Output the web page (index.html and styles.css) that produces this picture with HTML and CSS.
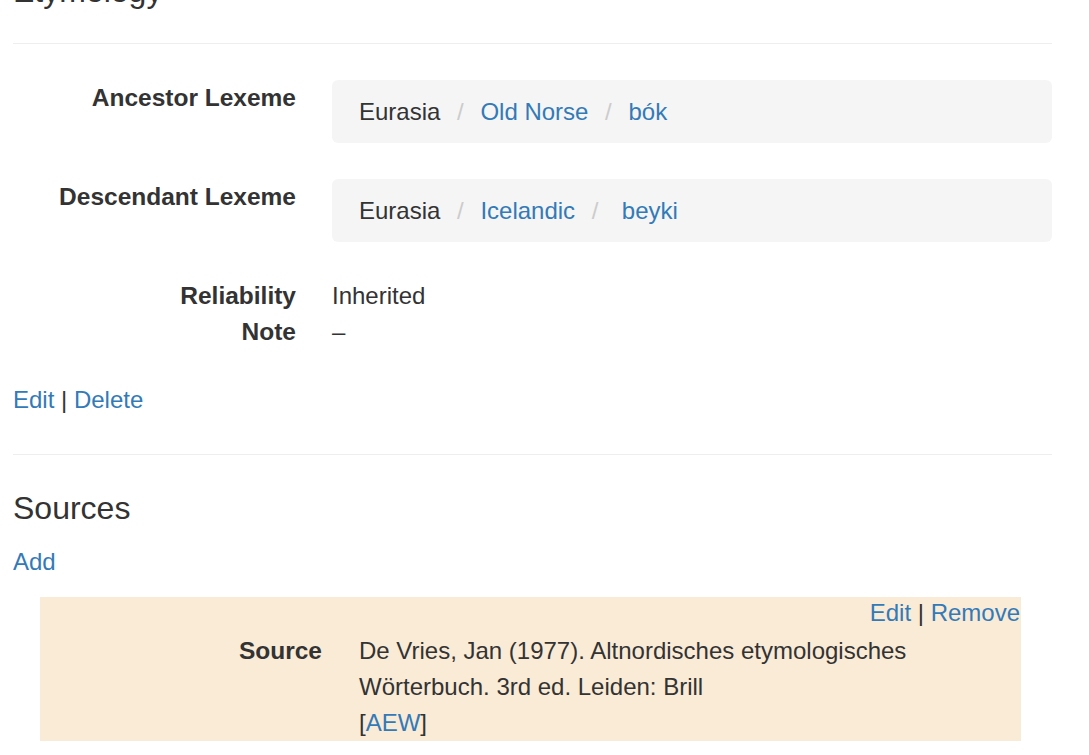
FILE: index.html
```html
<!DOCTYPE html>
<html lang="en">
<head>
<meta charset="utf-8">
<title>Etymology</title>
<link rel="stylesheet" href="styles.css">
</head>
<body>
<div class="page">
  <h2 class="title">Etymology</h2>
  <hr class="rule rule-top">
  <dl class="facts">
    <dt>Ancestor Lexeme</dt>
    <dd>
      <ol class="crumbs">
        <li>Eurasia</li>
        <li><a href="#">Old Norse</a></li>
        <li><a href="#">bók</a></li>
      </ol>
    </dd>
    <dt>Descendant Lexeme</dt>
    <dd>
      <ol class="crumbs">
        <li>Eurasia</li>
        <li><a href="#">Icelandic</a></li>
        <li><a href="#"> beyki</a></li>
      </ol>
    </dd>
    <dt>Reliability</dt>
    <dd>Inherited</dd>
    <dt>Note</dt>
    <dd>–</dd>
  </dl>
  <div class="actions"><a href="#">Edit</a> | <a href="#">Delete</a></div>
  <hr class="rule rule-mid">
  <h3 class="section-title">Sources</h3>
  <div class="add"><a href="#">Add</a></div>
  <div class="source-box">
    <div class="source-actions"><a href="#">Edit</a> | <a href="#">Remove</a></div>
    <dl class="source-facts">
      <dt>Source</dt>
      <dd>De Vries, Jan (1977). Altnordisches etymologisches Wörterbuch. 3rd ed. Leiden: Brill<br>[<a href="#">AEW</a>]</dd>
    </dl>
  </div>
</div>
</body>
</html>
```

FILE: styles.css
```css
html, body {
  margin: 0;
  padding: 0;
  background: #fff;
}

body {
  font-family: "Liberation Sans", Arial, Helvetica, sans-serif;
  font-size: 24px;
  line-height: 36px;
  color: #333;
  overflow: hidden;
}

a {
  color: #337ab7;
  text-decoration: none;
}

.page {
  padding: 0 37px 0 13px;
}

.title {
  font-size: 32px;
  font-weight: normal;
  line-height: 35px;
  margin: -26px 0 0;
}

.rule {
  border: 0;
  border-top: 1px solid #eee;
  height: 0;
}

.rule-top {
  margin: 34px 0 36px;
}

.rule-mid {
  margin: 36px 0 36px;
}

.facts {
  display: grid;
  grid-template-columns: 283px 1fr;
  column-gap: 36px;
  margin: 0 0 32px;
}

.facts dt,
.source-facts dt {
  font-weight: bold;
  font-size: 24.5px;
  text-align: right;
}

.facts dd,
.source-facts dd {
  margin: 0;
}

.crumbs {
  list-style: none;
  margin: 0 0 36px;
  padding: 13.5px 27px;
  background: #f5f5f5;
  border-radius: 6px;
}

.crumbs li {
  display: inline;
}

.crumbs li + li::before {
  content: "/\00a0";
  padding: 0 10px;
  color: #ccc;
}

.section-title {
  font-size: 32px;
  font-weight: normal;
  line-height: 35px;
  margin: 0 0 18px;
}

.add {
  margin: 0 0 17px;
}

.source-box {
  margin: 0 31px 0 27px;
  background: #faebd7;
}

.source-actions {
  text-align: right;
  padding: 0 1px 4px 0;
  line-height: 32px;
}

.source-facts {
  display: grid;
  grid-template-columns: 282px 1fr;
  column-gap: 37px;
  margin: 0;
}
```
